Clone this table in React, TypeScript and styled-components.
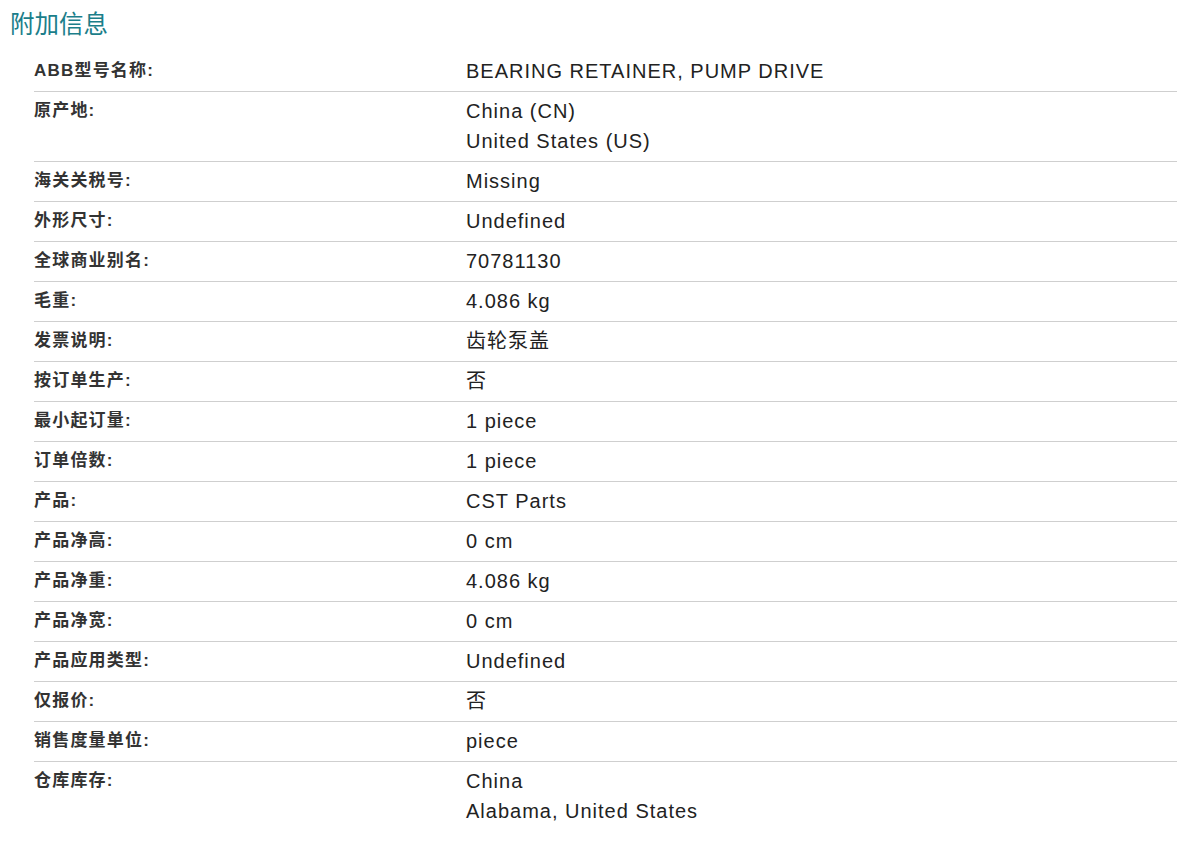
import React from "react";
import styled, { createGlobalStyle } from "styled-components";

const GlobalStyle = createGlobalStyle`
  html, body { margin: 0; padding: 0; background: #fff; }
  body { font-family: "Liberation Sans", Arial, "Noto Sans CJK SC", sans-serif; }
`;

const Page = styled.div`
  padding: 9px 0 0 10px;
`;

const Title = styled.h2`
  margin: 0;
  font-family: "Liberation Sans", Arial, "Noto Sans CJK SC", sans-serif;
  font-weight: 400;
  font-size: 24.5px;
  line-height: 32px;
  color: #1b7e8a;
`;

const Table = styled.dl`
  margin: 11px 0 0 24px;
  display: flex;
  flex-direction: column;
`;

const Row = styled.div<{ $last?: boolean }>`
  display: grid;
  grid-template-columns: 432px 1fr;
  padding: 4px 0 5px;
  border-bottom: ${(p) => (p.$last ? "none" : "1px solid #cfcfcf")};
`;

const Label = styled.dt`
  margin: 0;
  font-family: "Liberation Sans", Arial, "Noto Sans CJK SC", sans-serif;
  font-weight: 700;
  font-size: 17px;
  line-height: 30px;
  letter-spacing: 1.2px;
  color: #333;
`;

const Value = styled.dd`
  margin: 0;
  font-family: "Liberation Sans", Arial, "Noto Sans CJK SC", sans-serif;
  font-size: 20px;
  line-height: 30px;
  letter-spacing: 1px;
  color: #222;
`;

const Line = styled.div``;

const rows: [string, string[]][] = [
  ["ABB型号名称:", ["BEARING RETAINER, PUMP DRIVE"]],
  ["原产地:", ["China (CN)", "United States (US)"]],
  ["海关关税号:", ["Missing"]],
  ["外形尺寸:", ["Undefined"]],
  ["全球商业别名:", ["70781130"]],
  ["毛重:", ["4.086 kg"]],
  ["发票说明:", ["齿轮泵盖"]],
  ["按订单生产:", ["否"]],
  ["最小起订量:", ["1 piece"]],
  ["订单倍数:", ["1 piece"]],
  ["产品:", ["CST Parts"]],
  ["产品净高:", ["0 cm"]],
  ["产品净重:", ["4.086 kg"]],
  ["产品净宽:", ["0 cm"]],
  ["产品应用类型:", ["Undefined"]],
  ["仅报价:", ["否"]],
  ["销售度量单位:", ["piece"]],
  ["仓库库存:", ["China", "Alabama, United States"]],
];

export default function App() {
  return (
    <Page>
      <GlobalStyle />
      <Title>附加信息</Title>
      <Table>
        {rows.map(([label, values], i) => (
          <Row key={label} $last={i === rows.length - 1}>
            <Label>{label}</Label>
            <Value>
              {values.map((v) => (
                <Line key={v}>{v}</Line>
              ))}
            </Value>
          </Row>
        ))}
      </Table>
    </Page>
  );
}
